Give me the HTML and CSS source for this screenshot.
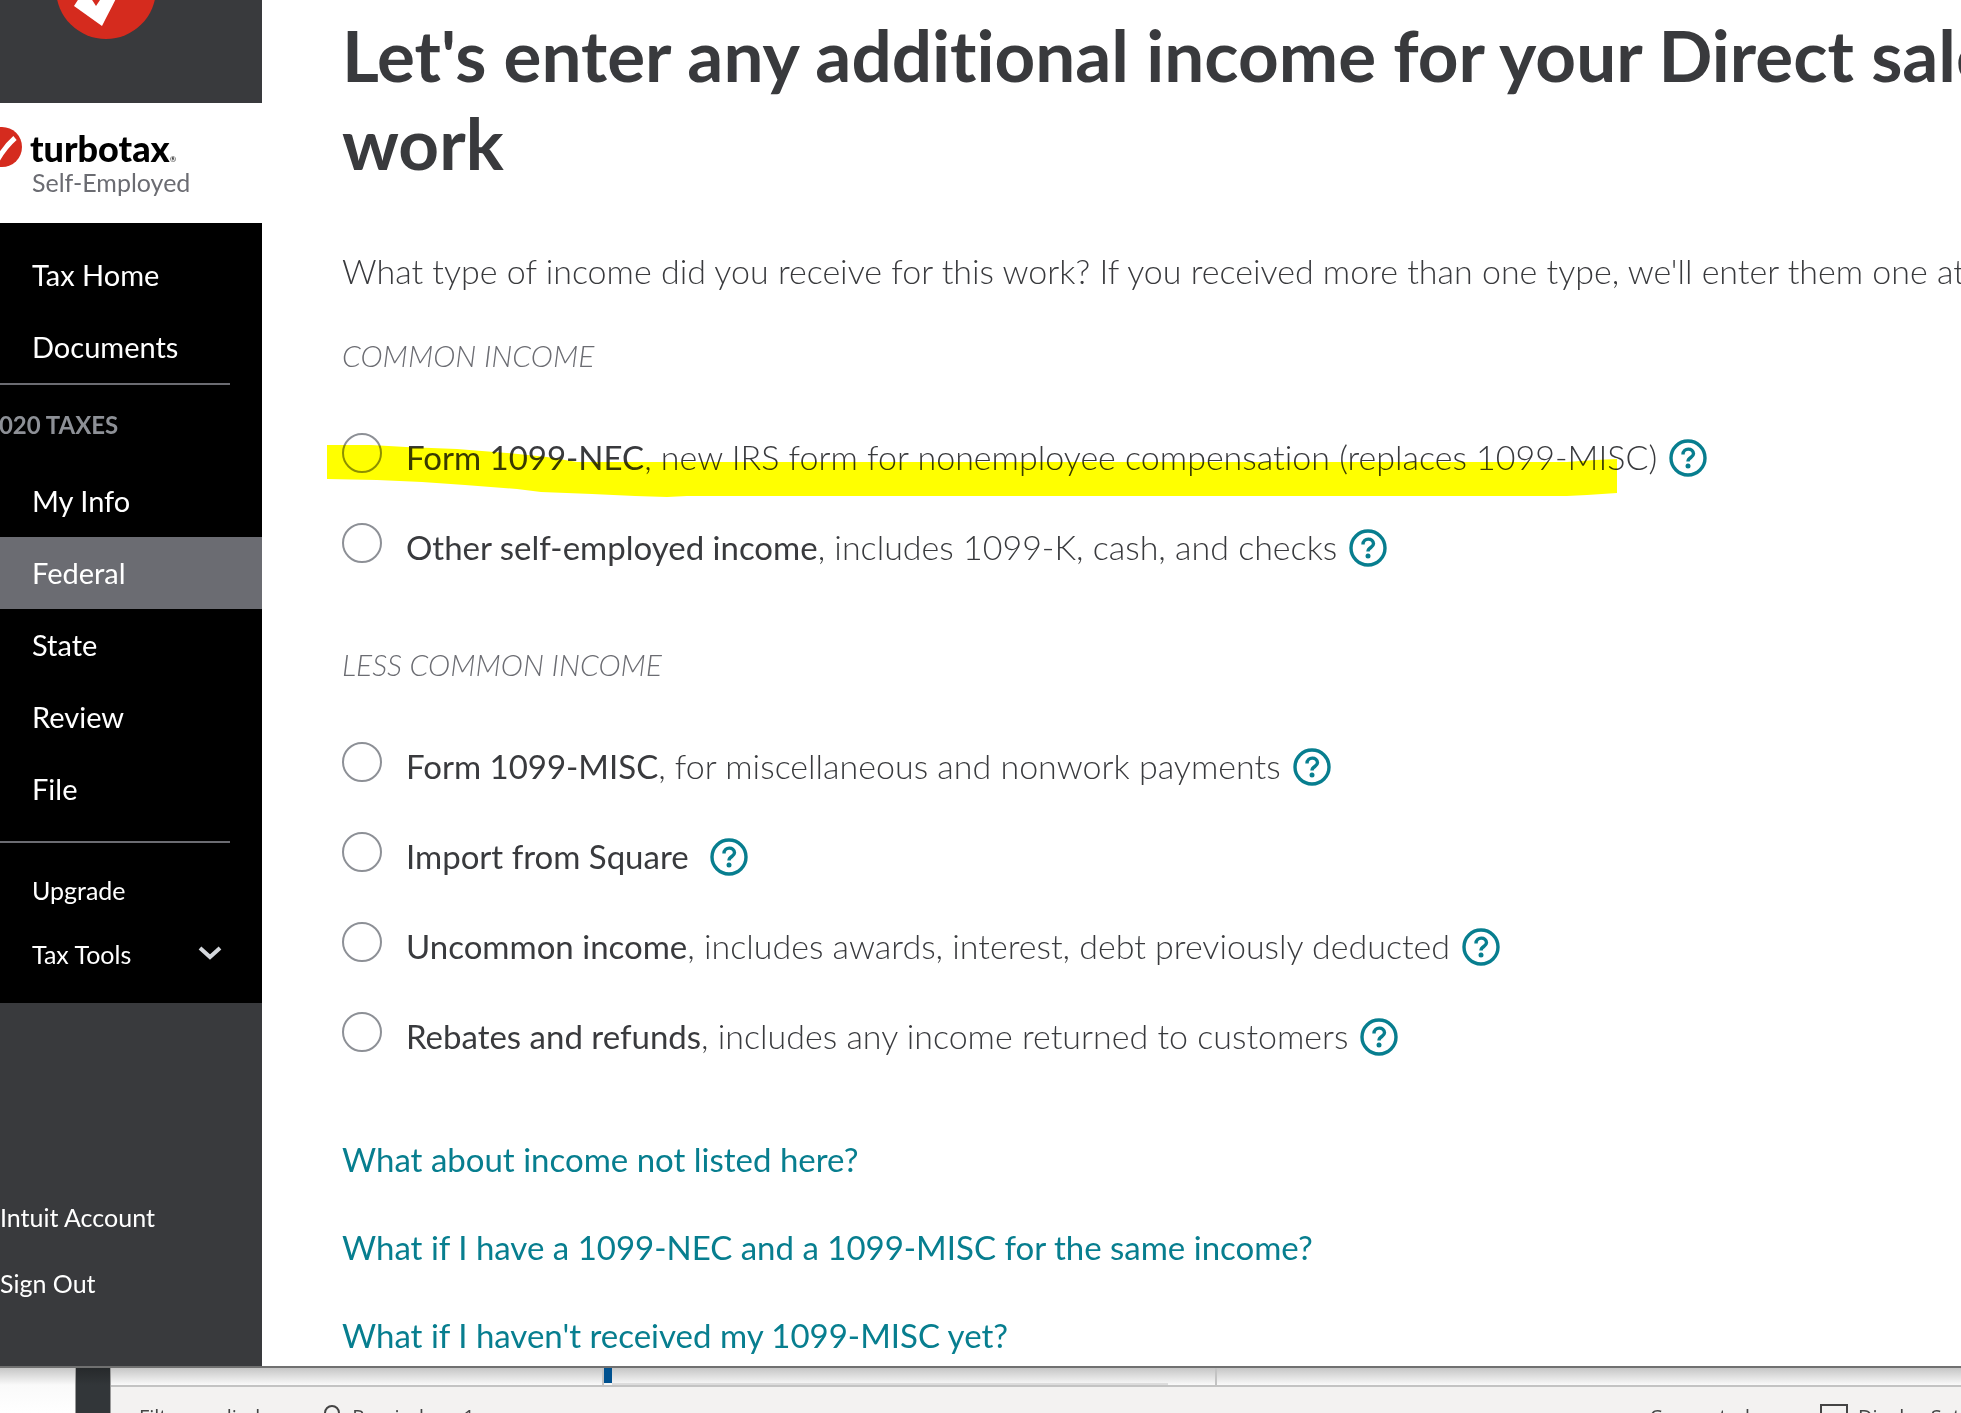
FILE: index.html
```html
<!DOCTYPE html>
<html lang="en">

<head>
    <meta charset="UTF-8">
    <meta name="viewport" content="width=device-width, initial-scale=1.0">
    <title>TurboTax Self-Employed</title>
    <link rel="stylesheet" href="styles.css">
</head>

<body>
    <svg class="defs" aria-hidden="true">
        <symbol id="help" viewBox="0 0 38 38">
            <circle cx="19" cy="19" r="17" fill="none" stroke="currentColor" stroke-width="3.4" />
            <path d="M14 15.5 C14 8.5 24.5 8.5 24.5 14.8 C24.5 18.6 19 18.4 19 22.5" fill="none" stroke="currentColor" stroke-width="3.4" />
            <circle cx="19" cy="27" r="2.5" fill="currentColor" />
        </symbol>
    </svg>

    <div class="app">
        <aside class="sidebar">
            <div class="sidebar-top">
                <svg class="badge" viewBox="0 0 100 100" aria-hidden="true">
                    <circle cx="50" cy="50" r="50" fill="#d52b1e" />
                    <path d="M18 67 L29 50 L40 67 L66 28 L90 10 C72 34 62 56 46 87 Z" fill="#fff" />
                </svg>
            </div>
            <div class="brand">
                <svg class="brand-icon" viewBox="0 0 40 40" aria-hidden="true">
                    <circle cx="20" cy="20" r="20" fill="#d52b1e" />
                    <path d="M6 22 L16 32 C20 25 25 18 33 11" fill="none" stroke="#fff" stroke-width="5" />
                </svg>
                <div class="brand-text">
                    <div class="brand-name">turbotax<span class="brand-mark">®</span></div>
                    <div class="brand-product">Self-Employed</div>
                </div>
            </div>
            <nav class="nav">
                <a href="#">Tax Home</a>
                <a href="#">Documents</a>
                <hr>
                <h2>2020 TAXES</h2>
                <a href="#">My Info</a>
                <a href="#" class="active">Federal</a>
                <a href="#">State</a>
                <a href="#">Review</a>
                <a href="#">File</a>
                <hr class="spaced">
                <a href="#" class="small">Upgrade</a>
                <button type="button" class="small">
                    Tax Tools
                    <svg class="chevron" viewBox="0 0 24 16" aria-hidden="true">
                        <path d="M2 2 L12 11 L22 2" fill="none" stroke="#d4d7dc" stroke-width="4" />
                    </svg>
                </button>
            </nav>
            <div class="account">
                <a href="#">Intuit Account</a>
                <a href="#">Sign Out</a>
            </div>
        </aside>

        <main class="content">
            <h1>Let's enter any additional income for your Direct sales<br>work</h1>
            <p class="intro">What type of income did you receive for this work? If you received more than one type, we'll enter them one at a time.</p>

            <form>
                <h3>COMMON INCOME</h3>
                <div class="option">
                    <input type="radio" name="income" id="nec">
                    <label for="nec"><b>Form 1099-NEC</b>, new IRS form for nonemployee compensation (replaces 1099-MISC)</label>
                    <button type="button" class="help" aria-label="Help"><svg><use href="#help" /></svg></button>
                    <svg class="marker" viewBox="0 0 1290 52" preserveAspectRatio="none" aria-hidden="true">
                        <path d="M0 0 L44 0 L79 2 L130 4 L180 8 L220 12 L250 17 L1240 17 L1268 15 L1290 14 L1290 48 L1260 50 L1240 51 L360 51 L340 52 L308 51 L265 49 L214 47 L190 44 L138 40 L95 37 L50 35 L0 34 Z" fill="#ff0" />
                    </svg>
                </div>
                <div class="option">
                    <input type="radio" name="income" id="other">
                    <label for="other"><b>Other self-employed income</b>, includes 1099-K, cash, and checks</label>
                    <button type="button" class="help" aria-label="Help"><svg><use href="#help" /></svg></button>
                </div>

                <h3>LESS COMMON INCOME</h3>
                <div class="option">
                    <input type="radio" name="income" id="misc">
                    <label for="misc"><b>Form 1099-MISC</b>, for miscellaneous and nonwork payments</label>
                    <button type="button" class="help" aria-label="Help"><svg><use href="#help" /></svg></button>
                </div>
                <div class="option">
                    <input type="radio" name="income" id="square">
                    <label for="square"><b>Import from Square</b>&nbsp;</label>
                    <button type="button" class="help" aria-label="Help"><svg><use href="#help" /></svg></button>
                </div>
                <div class="option">
                    <input type="radio" name="income" id="uncommon">
                    <label for="uncommon"><b>Uncommon income</b>, includes awards, interest, debt previously deducted</label>
                    <button type="button" class="help" aria-label="Help"><svg><use href="#help" /></svg></button>
                </div>
                <div class="option">
                    <input type="radio" name="income" id="rebates">
                    <label for="rebates"><b>Rebates and refunds</b>, includes any income returned to customers</label>
                    <button type="button" class="help" aria-label="Help"><svg><use href="#help" /></svg></button>
                </div>
            </form>

            <div class="faq">
                <a href="#">What about income not listed here?</a>
                <a href="#">What if I have a 1099-NEC and a 1099-MISC for the same income?</a>
                <a href="#">What if I haven't received my 1099-MISC yet?</a>
            </div>
        </main>
    </div>

    <footer class="backdrop">
        <div class="rail"></div>
        <div class="mail">
            <div class="panes">
                <div class="pane list"></div>
                <div class="pane reading">
                    <div class="selected"></div>
                    <div class="scroll"></div>
                </div>
            </div>
            <div class="status">
                <span>Filter applied</span>
                <span class="reminders">
                    <svg class="bell" viewBox="0 0 20 24" aria-hidden="true">
                        <path d="M3 20 V9 A7 7 0 0 1 17 9 V20 M0 20 H20" fill="none" stroke="#444" stroke-width="2" />
                    </svg>
                    Reminders: 1
                </span>
                <span class="connected">Connected</span>
                <span class="display">
                    <svg class="screen" viewBox="0 0 28 22" aria-hidden="true">
                        <rect x="1" y="1" width="26" height="18" fill="none" stroke="#444" stroke-width="2" />
                    </svg>
                    Display Settings
                </span>
            </div>
        </div>
    </footer>
</body>

</html>
```
FILE: styles.css
```css
* {
    box-sizing: border-box;
}

body {
    display: flex;
    flex-direction: column;
    height: 100vh;
    margin: 0;
    overflow: hidden;
    font-family: Lato, "Open Sans", sans-serif;
    font-variant-ligatures: none;
    color: #393a3d;
    background-color: #fff;
}

a {
    text-decoration: none;
}

button {
    padding: 0;
    border: none;
    background: none;
    font-family: inherit;
    cursor: pointer;
}

.defs {
    display: none;
}

.app {
    display: flex;
    flex: 1;
    min-height: 0;
    overflow: hidden;
}

/* sidebar */
.sidebar {
    display: flex;
    flex-direction: column;
    flex: none;
    width: 262px;
    overflow: hidden;
    background-color: #393a3d;
}

.sidebar-top {
    display: flex;
    align-items: flex-end;
    height: 103px;
    padding: 0 0 64px 56px;
}

.badge {
    flex: none;
    width: 100px;
    height: 100px;
}

.brand {
    display: flex;
    gap: 8px;
    height: 120px;
    padding-top: 24px;
    background-color: #fff;
}

.brand-icon {
    flex: none;
    width: 40px;
    height: 40px;
    margin-left: -18px;
}

.brand-name {
    display: flex;
    align-items: baseline;
    height: 40px;
    font-size: 36px;
    line-height: 42px;
    font-weight: 900;
    color: #000;
}

.brand-mark {
    font-size: 8px;
    font-weight: 400;
}

.brand-product {
    padding-left: 2px;
    font-size: 25px;
    line-height: 30px;
    color: #6b6c72;
}

.nav {
    display: flex;
    flex-direction: column;
    padding: 16px 0;
    background-color: #000;
}

.nav a,
.nav button {
    display: flex;
    align-items: center;
    justify-content: space-between;
    height: 72px;
    padding: 0 40px 2px 32px;
    font-size: 29px;
    color: #fff;
}

.nav a.active {
    background-color: #6b6c72;
}

.nav .small {
    height: 64px;
    padding-bottom: 3px;
    font-size: 25px;
}

.nav hr {
    width: 230px;
    height: 2px;
    margin: 0;
    border: none;
    background-color: #6b6c72;
}

.nav hr.spaced {
    margin: 16px 0;
}

.nav h2 {
    margin: 0 0 0 -15px;
    font-size: 24px;
    line-height: 80px;
    font-weight: 700;
    color: #8d9096;
}

.chevron {
    width: 24px;
    height: 16px;
}

.account {
    display: flex;
    flex-direction: column;
    margin-top: auto;
    padding-bottom: 50px;
}

.account a {
    font-size: 25px;
    line-height: 66px;
    color: #fff;
}

/* main column */
.content {
    flex: 1;
    min-width: 0;
    padding: 11px 0 0 80px;
    overflow: hidden;
    white-space: nowrap;
}

h1 {
    margin: 0;
    font-size: 71px;
    line-height: 88px;
    font-weight: 700;
}

.intro {
    margin: 60px 0 40px;
    font-size: 34px;
    line-height: 48px;
    font-weight: 300;
}

h3 {
    margin: 0 0 56px;
    font-size: 30px;
    line-height: 40px;
    font-weight: 300;
    font-style: italic;
    color: #6b6c72;
}

.option {
    position: relative;
    display: flex;
    align-items: center;
    height: 50px;
    margin-bottom: 40px;
}

.option input {
    flex: none;
    appearance: none;
    width: 40px;
    height: 40px;
    margin: 0 24px 6px 0;
    border: 2px solid #8d9096;
    border-radius: 50%;
}

.option label {
    font-size: 34px;
    font-weight: 300;
}

.option b {
    font-size: 33px;
    font-weight: 400;
}

.option + h3 {
    margin-top: 73px;
}

.help {
    width: 38px;
    height: 38px;
    margin: 4px 0 0 12px;
    color: #077e8f;
}

.help svg {
    display: block;
    width: 38px;
    height: 38px;
}

/* yellow pen stroke over the first option */
.marker {
    position: absolute;
    top: 14px;
    left: -15px;
    width: 1290px;
    height: 52px;
    mix-blend-mode: multiply;
    pointer-events: none;
}

.faq {
    display: flex;
    flex-direction: column;
    gap: 40px;
    padding-top: 35px;
}

.faq a {
    font-size: 33px;
    line-height: 48px;
    color: #077e8f;
}

/* mail window showing below the app */
.backdrop {
    display: flex;
    flex: none;
    height: 47px;
    padding-left: 75px;
    overflow: hidden;
    border-top: 2px solid #707070;
    background: linear-gradient(#c6c6c6, #fafafa 17px, #fff);
}

.rail {
    width: 36px;
    border: solid #999;
    border-width: 0 1px;
    background: linear-gradient(#26292b, #323639 17px);
}

.mail {
    display: flex;
    flex: 1;
    flex-direction: column;
    min-width: 0;
}

.panes {
    display: flex;
    flex: none;
    height: 19px;
    border-bottom: 2px solid #c3c3c3;
}

.list {
    width: 493px;
    border-right: 2px solid #c3c3c3;
}

.reading {
    display: flex;
    width: 613px;
    border-right: 2px solid #c3c3c3;
}

.selected {
    width: 8px;
    height: 15px;
    background-color: #00518f;
}

.scroll {
    width: 556px;
    border-bottom: 2px solid #dcdcdc;
}

.status {
    display: flex;
    flex: none;
    height: 60px;
    padding: 17px 0 0 28px;
    font-family: "Open Sans", sans-serif;
    font-size: 20px;
    line-height: 26px;
    color: #444;
    background-color: #f3f2f1;
    white-space: nowrap;
}

.reminders,
.display {
    display: flex;
    gap: 10px;
}

.reminders {
    margin-left: 62px;
}

.connected {
    margin-left: auto;
}

.display {
    width: 141px;
    margin-left: 70px;
}

.bell {
    flex: none;
    width: 20px;
    height: 24px;
}

.screen {
    flex: none;
    width: 28px;
    height: 22px;
}
```
